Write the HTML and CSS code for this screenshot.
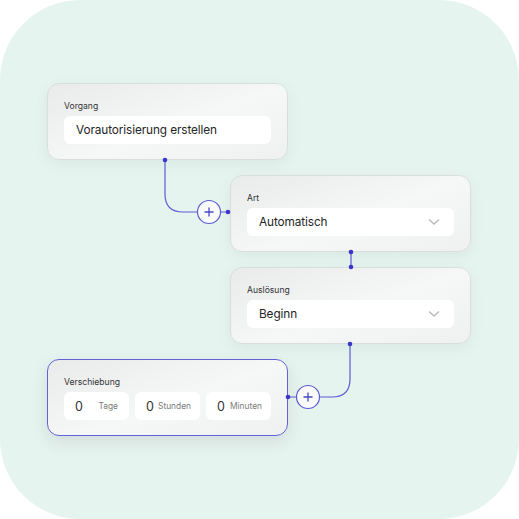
FILE: index.html
```html
<!DOCTYPE html>
<html lang="de">
<head>
    <meta charset="UTF-8">
    <title>Workflow</title>
    <link rel="stylesheet" href="styles.css">
</head>
<body>
    <div class="canvas">
        <svg class="wires" width="519" height="519" viewBox="0 0 519 519">
            <g fill="none" stroke="#5d5ad4" stroke-width="1.2">
                <path d="M165 160 V194 Q165 212 183 212 H197" />
                <path d="M221 212 H228" />
                <path d="M351 252 V267" />
                <path d="M350 344 V379 Q350 397 332 397 H320" />
                <path d="M296 397 H288" />
                <circle cx="209" cy="212" r="11.5" fill="#f8fbfa" />
                <circle cx="308" cy="397" r="11.5" fill="#f8fbfa" />
                <path d="M204.5 212 H213.5 M209 207.5 V216.5" stroke="#4a47c8" stroke-width="1.3" />
                <path d="M303.5 397 H312.5 M308 392.5 V401.5" stroke="#4a47c8" stroke-width="1.3" />
            </g>
            <g fill="#3a36c9">
                <circle cx="165" cy="160" r="2.3" />
                <circle cx="228" cy="212" r="2.3" />
                <circle cx="351" cy="252" r="2.3" />
                <circle cx="351" cy="267" r="2.3" />
                <circle cx="350" cy="344" r="2.3" />
                <circle cx="288" cy="397" r="2.3" />
            </g>
        </svg>

        <div class="node node-vorgang">
            <div class="label">Vorgang</div>
            <div class="field">Vorautorisierung erstellen</div>
        </div>

        <div class="node node-art">
            <div class="label">Art</div>
            <div class="field select">
                <span>Automatisch</span>
                <svg class="chevron" width="12" height="8" viewBox="0 0 12 8"><path d="M1 1.5 L6 6 L11 1.5" fill="none" stroke="#b9bcbc" stroke-width="1.4" /></svg>
            </div>
        </div>

        <div class="node node-ausloesung">
            <div class="label">Auslösung</div>
            <div class="field select">
                <span>Beginn</span>
                <svg class="chevron" width="12" height="8" viewBox="0 0 12 8"><path d="M1 1.5 L6 6 L11 1.5" fill="none" stroke="#b9bcbc" stroke-width="1.4" /></svg>
            </div>
        </div>

        <div class="node node-verschiebung active">
            <div class="label">Verschiebung</div>
            <div class="units">
                <div class="unit"><span class="num">0</span><span class="name name-tage">Tage</span></div>
                <div class="unit"><span class="num">0</span><span class="name">Stunden</span></div>
                <div class="unit"><span class="num">0</span><span class="name">Minuten</span></div>
            </div>
        </div>
    </div>
</body>
</html>
```

FILE: styles.css
```css
* {
    box-sizing: border-box;
    margin: 0;
    padding: 0;
}

body {
    font-family: 'Inter', 'Noto Sans', sans-serif;
    background: #fff;
    color: #222;
}

.canvas {
    position: relative;
    width: 519px;
    height: 519px;
    background: #e6f4ef;
    border-radius: 80px;
    overflow: hidden;
}

.wires {
    position: absolute;
    left: 0;
    top: 0;
    z-index: 2;
}

/* Nodes of the diagram */
.node {
    position: absolute;
    width: 241px;
    height: 77px;
    padding: 17px 16px 0 16px;
    border: 1px solid #d8dedb;
    border-radius: 12px;
    background: linear-gradient(160deg, #e9ebea 0%, #f6f8f7 55%, #eef1f0 100%);
    box-shadow: 0 4px 14px rgba(60, 80, 70, 0.07);
    z-index: 1;
}

.node.active {
    border-color: #6461d8;
    box-shadow: 0 6px 16px rgba(60, 60, 80, 0.12);
}

.node-vorgang { left: 47px; top: 83px; }
.node-art { left: 230px; top: 175px; }
.node-ausloesung { left: 230px; top: 267px; }
.node-verschiebung { left: 47px; top: 359px; }

.label {
    font-size: 8.6px;
    line-height: 11px;
    color: #333;
    margin-bottom: 4px;
}

.field {
    height: 28px;
    background: #fff;
    border-radius: 6px;
    padding: 0 12px;
    display: flex;
    align-items: center;
    font-size: 11.8px;
    letter-spacing: -0.1px;
    color: #252525;
}

.select {
    justify-content: space-between;
    padding-right: 14px;
}

.chevron {
    display: block;
}

.units {
    display: flex;
    gap: 6px;
}

.unit {
    width: 65px;
    height: 28px;
    background: #fff;
    border-radius: 6px;
    display: flex;
    align-items: center;
    justify-content: space-between;
    padding: 0 9px 0 11px;
}

.num {
    font-size: 12.5px;
    color: #333;
}

.name {
    font-size: 8.4px;
    color: #7a7a7a;
}

.name-tage {
    margin-right: 2px;
}
```
